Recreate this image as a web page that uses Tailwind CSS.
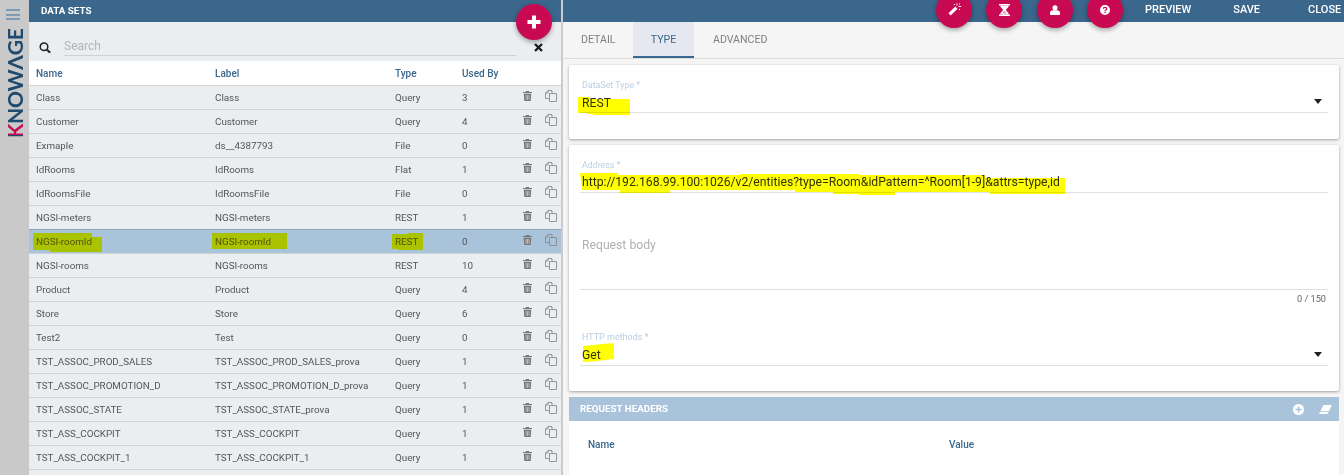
<!DOCTYPE html>
<html lang="en">

<head>
    <meta charset="UTF-8">
    <title>Knowage - Data Sets</title>
    <script src="https://cdn.jsdelivr.net/npm/@tailwindcss/browser@4"></script>
</head>

<body class="font-['Roboto',sans-serif] bg-[#f5f5f5]">

    <div class="relative flex w-[1344px] h-[475px] overflow-hidden">

        <!-- Main menu strip -->
        <aside class="w-[29px] shrink-0 bg-[#c9c9c9] flex flex-col items-center">
            <div class="mt-[9px] w-[14px] flex flex-col gap-[2.500px] ml-[-3px]">
                <span class="block h-[2px] bg-[#7d99b3]"></span>
                <span class="block h-[2px] bg-[#7d99b3]"></span>
                <span class="block h-[2px] bg-[#7d99b3]"></span>
            </div>
            <div class="mt-[8px] ml-[1px] h-[110px] flex items-center justify-center [writing-mode:vertical-rl] rotate-180 font-['Lato',sans-serif] font-bold text-[21px] leading-[16px] tracking-[-0.2px] text-[#1d4a6e]">
                <span class="bg-[linear-gradient(to_bottom,#1d4a6e_0,#1d4a6e_3px,#c70a52_3px)] bg-clip-text text-transparent">K</span>NOWΛGE
            </div>
        </aside>

        <!-- Data set list -->
        <section class="relative w-[532px] shrink-0 bg-[#ebeef1] flex flex-col">
            <header class="h-[22px] bg-[#3b678c] flex items-center pl-[12px] text-[9.800px] font-bold text-white">DATA SETS</header>

            <div class="h-[39px] flex items-end pl-[10px] pr-[45px] pb-[5px]">
                <svg class="w-[12px] h-[11px] mb-[3px] shrink-0" viewBox="0 0 12 11" fill="none" stroke="#222" stroke-width="1.500">
                    <circle cx="5" cy="4.800" r="3.800"></circle>
                    <path d="M8 7.800l3.200 3" stroke-width="2"></path>
                </svg>
                <div class="ml-[13px] flex-1 h-[22px] border-b border-[#cfd2d5] text-[12px] leading-[24px] text-[#b4b4b4]">Search</div>
            </div>

            <div class="h-[25px] bg-white flex items-center border-b border-[#cfd2d5] pl-[7px] text-[10px] font-medium text-[#3b678c]">
                <span class="w-[179px]">Name</span>
                <span class="w-[180px]">Label</span>
                <span class="w-[67px]">Type</span>
                <span>Used By</span>
            </div>

            <div id="rows"></div>

            <button class="absolute left-[487px] top-[4px] w-[36px] h-[36px] rounded-full bg-[#c70a52] shadow-[0_2px_5px_rgba(0,0,0,0.35)] flex items-center justify-center">
                <svg class="w-[14px] h-[14px]" viewBox="0 0 14 14" fill="#fff">
                    <path d="M5 .5h4V5h4.500v4H9v4.500H5V9H.5V5H5z"></path>
                </svg>
            </button>
            <svg class="absolute left-[505px] top-[43px] w-[9px] h-[9px]" viewBox="0 0 9 9" stroke="#1c1c1c" stroke-width="2.400">
                <path d="M1 1l7 7M8 1L1 8"></path>
            </svg>
        </section>

        <div class="w-[2px] shrink-0 bg-[#cbcbcb]"></div>

        <!-- Detail -->
        <main class="flex-1 flex flex-col min-w-0">
            <header class="h-[22px] bg-[#3b678c] flex text-[11px] font-medium text-white">
                <div class="ml-[373px] mt-[-8px] flex gap-[14.330px] h-[36px]">
                    <button class="w-[36px] h-[36px] rounded-full bg-[#c70a52] shadow-[0_2px_5px_rgba(0,0,0,0.35)] flex items-center justify-center pb-[1px]">
                        <svg class="w-[13px] h-[13px]" viewBox="0 0 13 13" fill="#fff">
                            <path d="M.5 10.300l6.800-6.800 2.200 2.200-6.800 6.800z"></path>
                            <path d="M8.500 .5h1v2h-1zM10.500 3h2.500v1h-2.500zM6 1h1v1H6zM11 .5h1v1h-1zM11 6h1v1h-1z"></path>
                        </svg>
                    </button>
                    <button class="w-[36px] h-[36px] rounded-full bg-[#c70a52] shadow-[0_2px_5px_rgba(0,0,0,0.35)] flex items-center justify-center pb-[1px]">
                        <svg class="w-[11px] h-[12px]" viewBox="0 0 11 12" fill="#fff">
                            <path d="M0 0h11v1.500H0zM0 10.500h11V12H0z"></path>
                            <path d="M1.200 1.500h8.600c0 2.300-2.800 3.300-2.800 4.500s2.800 2.200 2.800 4.500H1.200c0-2.300 2.800-3.300 2.800-4.500S1.200 3.800 1.200 1.500z"></path>
                            <path d="M5.500 6.800c.8.800 2 1.500 2.400 2.700H3.100c.4-1.200 1.600-1.900 2.400-2.700z" fill="#e4a0ba"></path>
                        </svg>
                    </button>
                    <button class="w-[36px] h-[36px] rounded-full bg-[#c70a52] shadow-[0_2px_5px_rgba(0,0,0,0.35)] flex items-center justify-center pb-[1px]">
                        <svg class="w-[10px] h-[10px]" viewBox="0 0 11 11" fill="#fff">
                            <circle cx="5.500" cy="3" r="2.800"></circle>
                            <path d="M0 11V8.500C0 6.800 1.400 5.700 3 5.700h5c1.600 0 3 1.100 3 2.800V11z"></path>
                        </svg>
                    </button>
                    <button class="w-[36px] h-[36px] rounded-full bg-[#c70a52] shadow-[0_2px_5px_rgba(0,0,0,0.35)] flex items-center justify-center pb-[1px]">
                        <svg class="w-[10px] h-[10px]" viewBox="0 0 11 11">
                            <circle cx="5.500" cy="5.500" r="5.500" fill="#fff"></circle>
                            <path d="M3.700 4.200c0-2.200 3.700-2.200 3.700 0 0 1.300-1.800 1.300-1.800 2.300" fill="none" stroke="#c70a52" stroke-width="1.400"></path>
                            <path d="M4.800 7.400h1.500v1.400H4.800z" fill="#c70a52"></path>
                        </svg>
                    </button>
                </div>
                <span class="ml-[22px] mt-[3px] leading-[14px]">PREVIEW</span>
                <span class="ml-[42px] mt-[3px] leading-[14px]">SAVE</span>
                <span class="ml-[48px] mt-[3px] leading-[14px]">CLOSE</span>
            </header>

            <nav class="h-[37px] shrink-0 flex border-b border-[#dcdcdc] text-[10.600px] text-[#7f7f7f]">
                <span class="w-[70px] pl-[18px] leading-[36px]">DETAIL</span>
                <span class="w-[61px] text-center leading-[36px] bg-[#e5e8f1] text-[#3b678c] border-b-2 border-[#3b678c] h-[36px]">TYPE</span>
                <span class="pl-[19px] leading-[36px]">ADVANCED</span>
            </nav>

            <div class="pt-[6px] pl-[6px] pr-[5px] flex flex-col gap-[6px]">
                <div class="h-[74px] bg-white rounded-[2px] shadow-[0_1px_3px_rgba(0,0,0,0.35)] px-[11px] pt-[15px]">
                    <div class="pl-[2px] text-[8.900px] leading-[11px] text-[#bacfe2]">DataSet Type *</div>
                    <div class="relative h-[22px] border-b border-[#dfdfdf] text-[12.200px] leading-[24px] text-[#333] pl-[2px]">REST
                        <span class="absolute right-[6px] top-[8px] border-x-[4px] border-x-transparent border-t-[5px] border-t-[#222]"></span>
                    </div>
                </div>

                <div class="h-[246px] bg-white rounded-[2px] shadow-[0_1px_3px_rgba(0,0,0,0.35)] px-[11px] pt-[15px]">
                    <div class="pl-[2px] text-[8.800px] leading-[11px] text-[#bacfe2]">Address *</div>
                    <div class="h-[22px] border-b border-[#dfdfdf] text-[12.200px] leading-[22px] text-[#333] pl-[2px]">http://192.168.99.100:1026/v2/entities?type=Room&amp;idPattern=^Room[1-9]&amp;attrs=type,id</div>
                    <div class="h-[97px] border-b border-[#dfdfdf] pt-[43px] text-[12.200px] leading-[18px] text-[#b0b0b0] pl-[2px]">Request body</div>
                    <div class="text-right text-[9.200px] leading-[17px] text-[#666] pr-[2px]">0 / 150</div>
                    <div class="pl-[2px] mt-[25px] text-[9px] leading-[11px] text-[#bacfe2]">HTTP methods *</div>
                    <div class="relative h-[23px] border-b border-[#dfdfdf] text-[12.200px] leading-[24px] text-[#333] pl-[2px]">Get
                        <span class="absolute right-[6px] top-[9px] border-x-[4px] border-x-transparent border-t-[5px] border-t-[#222]"></span>
                    </div>
                </div>

                <div class="bg-white h-[100px] rounded-[2px]">
                    <div class="h-[24px] bg-[#a9c3da] flex items-center pl-[11px] pr-[7px] text-[9.800px] font-bold text-white">
                        <span class="flex-1">REQUEST HEADERS</span>
                        <svg class="w-[11px] h-[11px]" viewBox="0 0 11 11">
                            <circle cx="5.500" cy="5.500" r="5.500" fill="#fff"></circle>
                            <path d="M4.700 2.500h1.600v2.200h2.200v1.600H6.300v2.200H4.700V6.300H2.500V4.700h2.200z" fill="#a9c3da"></path>
                        </svg>
                        <svg class="ml-[15px] w-[13px] h-[9px]" viewBox="0 0 13 9" fill="#fff">
                            <path d="M4.500 0H13L10 6H1.500z"></path>
                            <path d="M1.200 6.700h8.500L8.500 9H0z"></path>
                        </svg>
                    </div>
                    <div class="flex pl-[19px] pt-[16px] text-[10px] font-medium text-[#3b678c]">
                        <span class="w-[361px]">Name</span>
                        <span>Value</span>
                    </div>
                </div>
            </div>
        </main>

        <!-- Highlighter marks drawn over the screenshot -->
        <svg class="absolute left-0 top-0 w-[1344px] h-[475px] mix-blend-multiply pointer-events-none" viewBox="0 0 1344 475" fill="#ffff00">
            <path d="M578 97H590V99H630V115H593V114H587V113H578Z"></path>
            <path d="M580 173H618V175H740V174H860V175H985V178H1065V194H990V192H895V195H860V194H833V192H795V190H670V193H620V190H582Z"></path>
            <path d="M583 346L593 345L603 344L614 343V359L604 360L598 361L583 362Z"></path>
            <path d="M33 233H92V237H102V252H50V250H33Z"></path>
            <path d="M212 233H287V249H212Z"></path>
            <path d="M392 234H408V233H423V250H398V249H392Z"></path>
        </svg>
    </div>

    <script>
        // Data set rows of the left list
        var dataSets = [
            ["Class", "Class", "Query", "3"],
            ["Customer", "Customer", "Query", "4"],
            ["Exmaple", "ds__4387793", "File", "0"],
            ["IdRooms", "IdRooms", "Flat", "1"],
            ["IdRoomsFile", "IdRoomsFile", "File", "0"],
            ["NGSI-meters", "NGSI-meters", "REST", "1"],
            ["NGSI-roomId", "NGSI-roomId", "REST", "0"],
            ["NGSI-rooms", "NGSI-rooms", "REST", "10"],
            ["Product", "Product", "Query", "4"],
            ["Store", "Store", "Query", "6"],
            ["Test2", "Test", "Query", "0"],
            ["TST_ASSOC_PROD_SALES", "TST_ASSOC_PROD_SALES_prova", "Query", "1"],
            ["TST_ASSOC_PROMOTION_D", "TST_ASSOC_PROMOTION_D_prova", "Query", "1"],
            ["TST_ASSOC_STATE", "TST_ASSOC_STATE_prova", "Query", "1"],
            ["TST_ASS_COCKPIT", "TST_ASS_COCKPIT", "Query", "1"],
            ["TST_ASS_COCKPIT_1", "TST_ASS_COCKPIT_1", "Query", "1"]
        ];

        var trashIcon = '<svg class="w-[9px] h-[10px]" viewBox="0 0 9 10" fill="#767676"><path d="M3 0h3l.5 1H9v1H0V1h2.500z"></path><path d="M.8 2.800h7.400L7.700 10H1.300z"></path><path d="M2.700 4h.6v4.800h-.6zM4.200 4h.6v4.800h-.6zM5.700 4h.6v4.800h-.6z" fill="#ebeef1"></path></svg>';
        var copyIcon = '<svg class="w-[12px] h-[12px]" viewBox="0 0 12 12" fill="none" stroke="#8a8a8a" stroke-width="0.9"><path d="M4 8.500H.5V3L3 .5h4V3"></path><path d="M3 .8V3H.8"></path><path d="M4.500 3.500h7v8h-7z"></path></svg>';

        var html = "";
        dataSets.forEach(function (row, i) {
            var rowClass = i == 6 ? "bg-[#a9c3da] border-[#d0d3d6]" : (i == 5 ? "border-[#8ba6be]" : "border-[#d0d3d6]");
            html += '<div class="h-[24px] flex items-center border-b pl-[7px] pt-[1px] text-[9.800px] text-[#555] ' + rowClass + '">' +
                '<span class="w-[179px]">' + row[0] + '</span>' +
                '<span class="w-[180px]">' + row[1] + '</span>' +
                '<span class="w-[67px]">' + row[2] + '</span>' +
                '<span class="w-[61px]">' + row[3] + '</span>' +
                '<span class="w-[22px] flex pb-[4px]">' + trashIcon + '</span>' +
                '<span class="flex pb-[4px]">' + copyIcon + '</span>' +
                '</div>';
        });
        document.getElementById("rows").innerHTML = html;
    </script>

</body>

</html>
